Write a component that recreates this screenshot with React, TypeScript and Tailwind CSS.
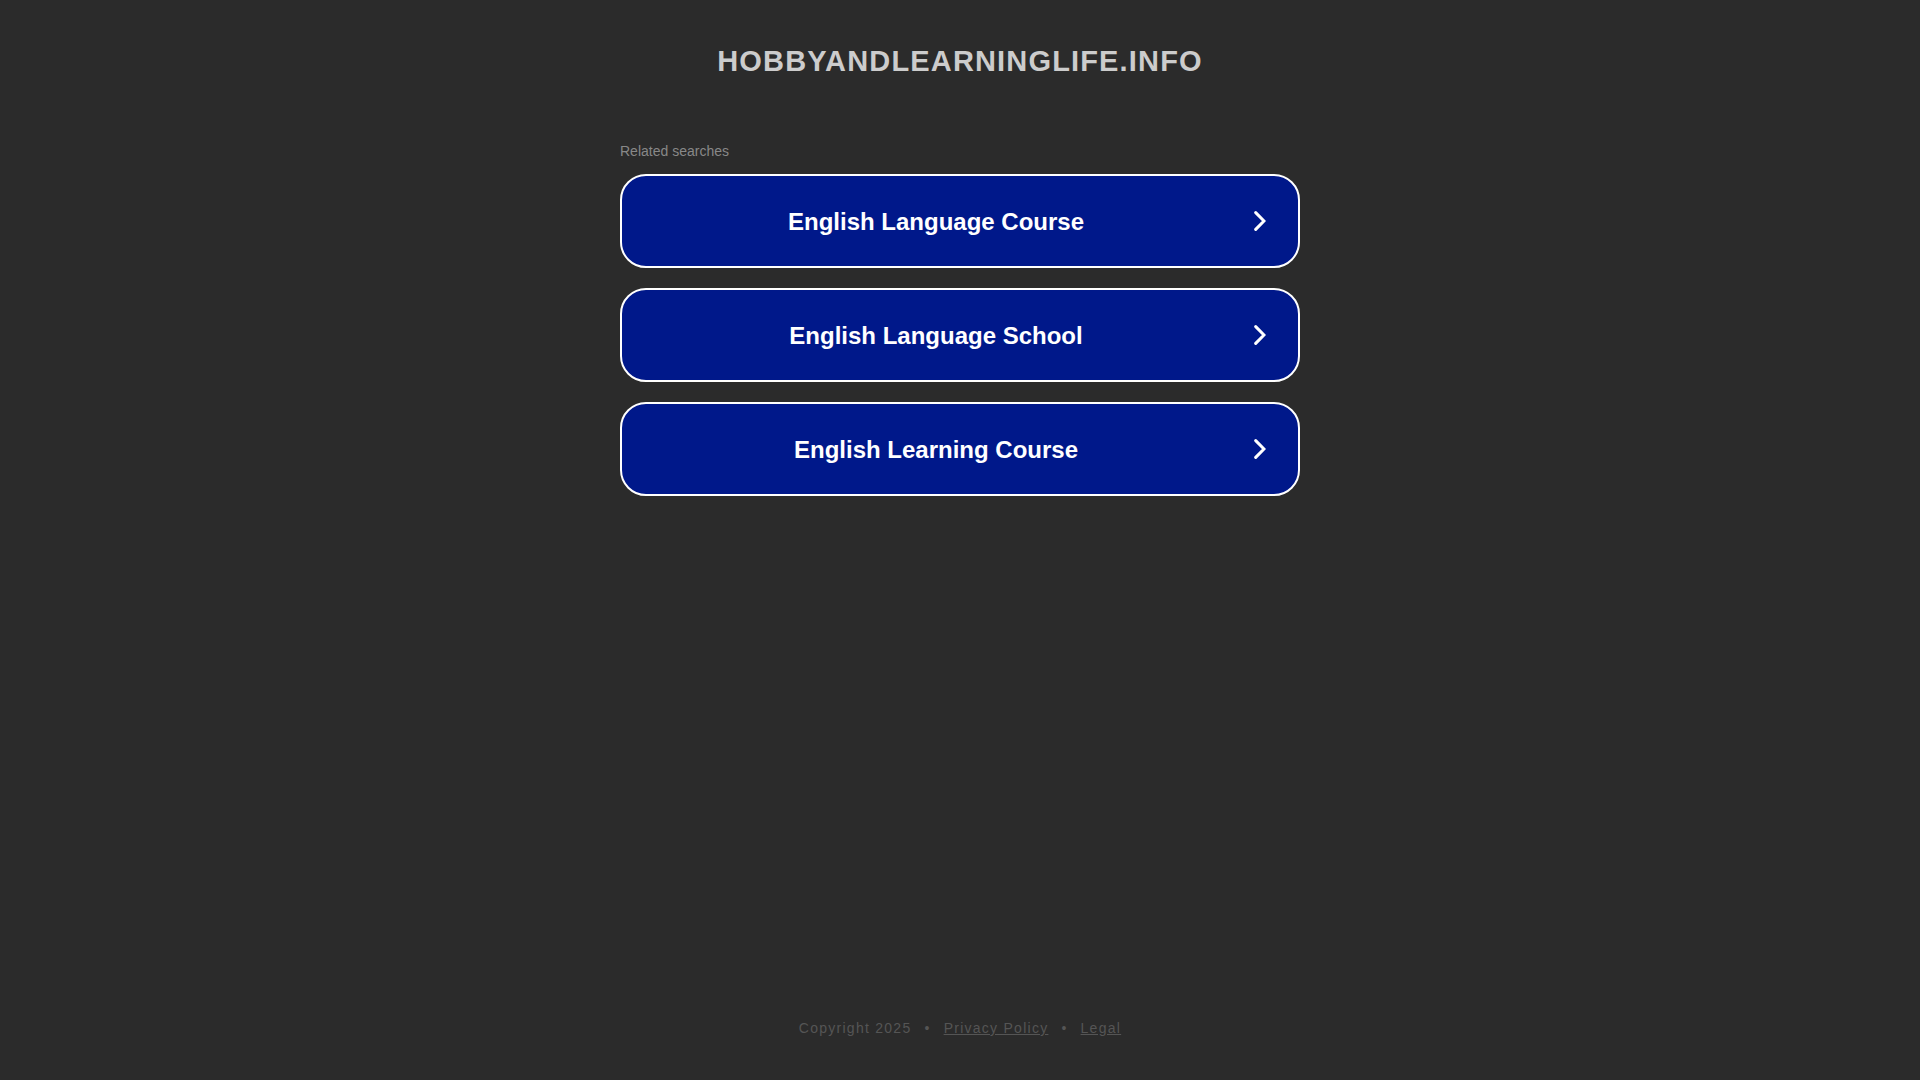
interface SearchLinkProps {
  title: string;
}

const searches = [
  'English Language Course',
  'English Language School',
  'English Learning Course',
];

function ChevronIcon() {
  return (
    <svg
      xmlns="http://www.w3.org/2000/svg"
      className="h-5 w-3"
      viewBox="0 0 12 20"
      fill="none"
      stroke="currentColor"
      strokeWidth={3}
      strokeLinecap="round"
      aria-hidden="true"
    >
      <path d="M1.7 1.6L10 10L1.7 18.4" />
    </svg>
  );
}

function SearchLink({ title }: SearchLinkProps) {
  return (
    <a
      href="#"
      className="flex h-[94px] items-center rounded-[26px] border-2 border-white bg-[#00188a] text-white"
    >
      <span className="flex-1 pt-0.5 pl-7 text-center text-2xl font-bold">{title}</span>
      <span className="flex w-[76px] justify-center">
        <ChevronIcon />
      </span>
    </a>
  );
}

export default function App() {
  return (
    <div className="flex min-h-screen flex-col bg-[#2b2b2b] font-['Liberation_Sans',Arial,sans-serif]">
      <header className="pt-10 text-center">
        <h1 className="text-[29px] leading-[42px] font-bold tracking-[0.04em] text-[#ccc] uppercase">
          hobbyandlearninglife.info
        </h1>
      </header>

      <main className="mx-auto w-full max-w-[680px] flex-1 pt-[59px]">
        <h2 className="mb-[13px] text-sm text-[#888]">Related searches</h2>
        <ul className="flex flex-col gap-5">
          {searches.map((title) => (
            <li key={title}>
              <SearchLink title={title} />
            </li>
          ))}
        </ul>
      </main>

      <footer className="flex justify-center gap-[13px] pb-[42px] text-sm tracking-[0.09em] text-[#555]">
        <span>Copyright 2025</span>
        <span>•</span>
        <a href="#" className="underline">Privacy Policy</a>
        <span>•</span>
        <a href="#" className="underline">Legal</a>
      </footer>
    </div>
  );
}
